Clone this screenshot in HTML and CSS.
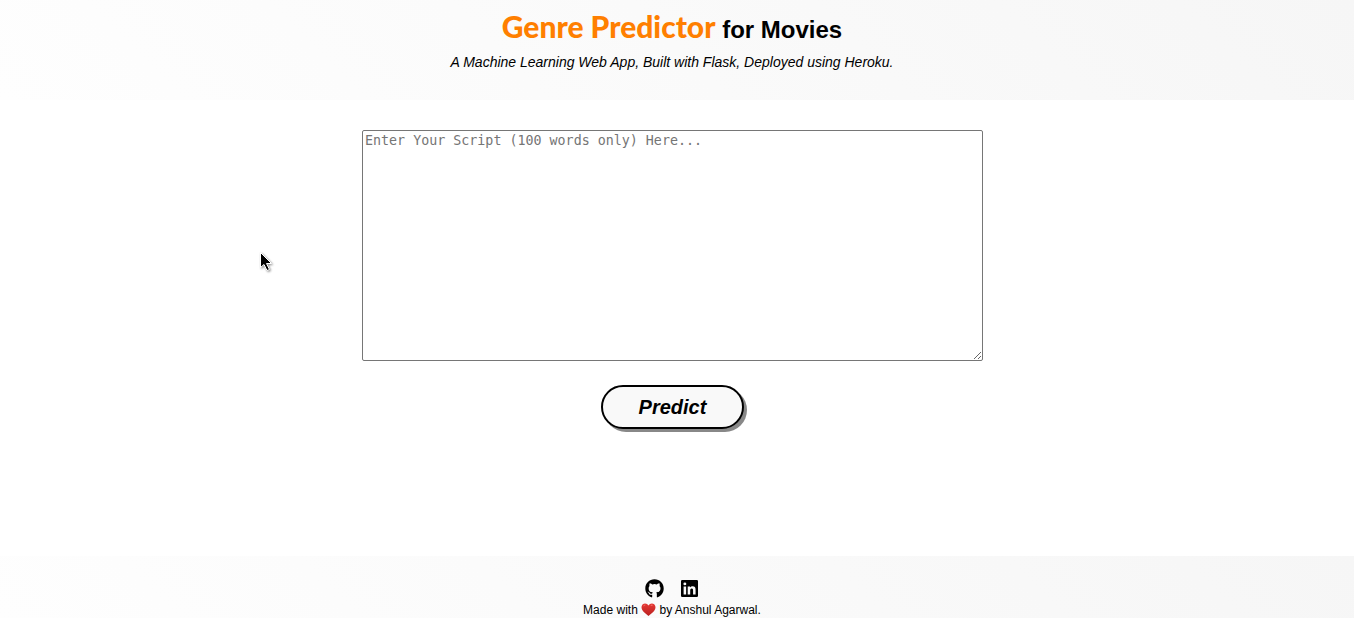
FILE: index.html
```html
<!DOCTYPE html>
<html lang="en">
<head>
<meta charset="utf-8">
<meta name="viewport" content="width=device-width, initial-scale=1">
<title>Genre Predictor for Movies</title>
<link rel="stylesheet" href="styles.css">
</head>
<body class="page">
  <header class="header">
    <h1 class="title"><span class="brand">Genre Predictor</span> for Movies</h1>
    <p class="tagline">A Machine Learning Web App, Built with Flask, Deployed using Heroku.</p>
  </header>
  <main class="main">
    <form class="form">
      <textarea class="script" name="script" rows="15" cols="75" aria-label="Script" placeholder="Enter Your Script (100 words only) Here..."></textarea>
      <button class="predict" type="button">Predict</button>
    </form>
  </main>
  <footer class="footer">
    <nav class="social">
      <a class="social-link" href="#" aria-label="GitHub">
        <svg class="icon" viewBox="0 0 496 512" aria-hidden="true"><path d="M248 8C107 8 0 115 0 256c0 112 70 204 168 239 13 2 18-6 18-12v-58s-70 15-85-30c0 0-11-29-28-37 0 0-23-16 2-15 0 0 25 2 39 26 22 39 59 28 73 21 2-16 9-27 16-34-56-6-112-14-112-110 0-28 8-42 24-60-3-7-11-33 2-68 21-7 69 27 69 27a237 237 0 0 1 126 0s48-34 69-27c13 35 6 61 2 68 16 18 26 32 26 60 0 97-59 104-115 110 9 8 17 23 17 47v80c0 6 5 14 18 12 98-35 167-127 167-239C496 115 389 8 248 8z"/></svg>
      </a>
      <a class="social-link" href="#" aria-label="LinkedIn">
        <svg class="icon" viewBox="-26 -26 500 500" aria-hidden="true"><path fill-rule="evenodd" d="M32 0h384q32 0 32 32v384q0 32-32 32H32q-32 0-32-32V32Q0 0 32 0zM69 170v214h66V170zM102 64a38 38 0 1 0 0 77 38 38 0 0 0 0-77zM177 170v214h66V278c0-28 5-55 40-55s35 32 35 57v104h66V267c0-58-12-102-80-102-32 0-54 18-63 34h-1v-29z"/></svg>
      </a>
    </nav>
    <p class="credit">Made with <svg class="heart" viewBox="0 0 28 26" role="img" aria-label="love"><defs><linearGradient id="red" x1="0" y1="0" x2="0" y2="1"><stop offset="0" stop-color="#e53935"/><stop offset="1" stop-color="#b9201f"/></linearGradient></defs><path fill="url(#red)" d="M14 5C11-1 1-1 0 8c0 8 8 13 14 18 6-5 14-10 14-18C27-1 17-1 14 5z"/><path fill="#f26a61" d="M3 7q1-4 5-4 0 2-3 3zM18 5q2-3 5-1-1 2-4 2z"/></svg> by Anshul Agarwal.</p>
  </footer>
  <svg class="pointer" viewBox="0 0 12 19" aria-hidden="true"><path fill="#000" stroke="#fff" d="M.5.5v15l3.500-3 3 6 2.500-1-3-6h5z"/></svg>
</body>
</html>
```
FILE: styles.css
```css
* {
  box-sizing: border-box;
}

.page {
  display: flex;
  flex-direction: column;
  min-height: 100vh;
  margin: 0;
  font-family: "Liberation Sans", Arial, sans-serif;
  color: #000;
  background: #fff;
}

.header,
.footer {
  padding-right: 10px;
  text-align: center;
  background: linear-gradient(45deg, #fefefe, #f6f6f6);
}

.header {
  padding-top: 12px;
  padding-bottom: 28px;
}

.title {
  margin: 0;
  font-size: 24px;
  line-height: 36px;
}

.brand {
  font-family: Lato, sans-serif;
  font-size: 30px;
  font-weight: 900;
  line-height: 24px;
  color: #ff7f00;
}

.tagline {
  margin: 4px 0 0;
  font-size: 14px;
  font-style: italic;
  line-height: 20px;
}

.main {
  flex: 1;
  padding: 30px 9px 30px 0;
}

.form {
  display: flex;
  flex-direction: column;
  align-items: center;
  gap: 24px;
}

.script {
  width: 621px;
  max-width: 100%;
  margin: 0;
  padding: 2px;
  border: 1px solid #767676;
  border-radius: 2px;
  font: 13.333px "DejaVu Sans Mono", monospace;
  background: #fff;
}

.script::placeholder {
  color: #757575;
}

.predict {
  padding: 8px 36px;
  border: 2px solid #000;
  border-radius: 22px;
  font: italic bold 20px/24px "Liberation Sans", Arial, sans-serif;
  color: #000;
  background: #f9f9f9;
  box-shadow: 3px 3px 0 #888;
}

.footer {
  padding-top: 23px;
}

.social {
  display: flex;
  justify-content: center;
  gap: 16px;
}

.social-link {
  display: flex;
  color: #000;
}

.icon {
  width: 19px;
  height: 19px;
  margin-bottom: 2px;
  fill: currentColor;
}

.credit {
  margin: 2px 0 0;
  font-size: 12px;
  line-height: 16px;
}

.heart {
  width: 15px;
  height: 13px;
  vertical-align: -2px;
}

.pointer {
  position: absolute;
  top: 252px;
  left: 260px;
  width: 12px;
  height: 19px;
  filter: drop-shadow(1px 1px 1px #888);
  pointer-events: none;
}
```
